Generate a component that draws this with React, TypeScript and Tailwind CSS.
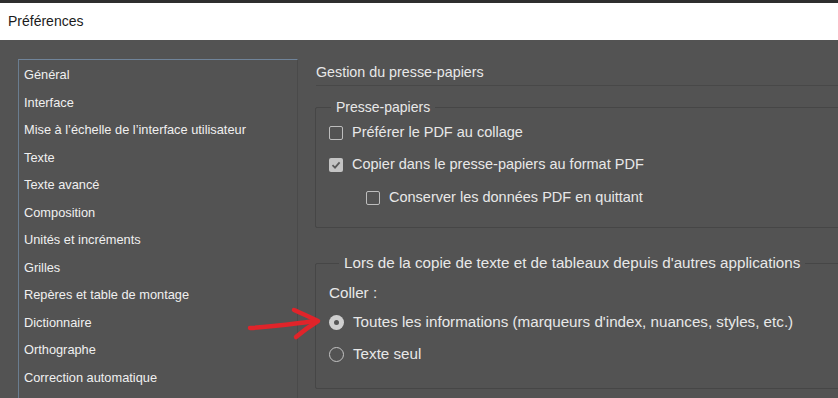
import React from "react";

const items = [
  "Général",
  "Interface",
  "Mise à l’échelle de l’interface utilisateur",
  "Texte",
  "Texte avancé",
  "Composition",
  "Unités et incréments",
  "Grilles",
  "Repères et table de montage",
  "Dictionnaire",
  "Orthographe",
  "Correction automatique",
];

function Checkbox({ checked }: { checked?: boolean }) {
  return checked ? (
    <span className="w-[14px] h-[14px] rounded-[2px] bg-[#c4c4c4] flex items-center justify-center shrink-0">
      <svg width="10" height="10" viewBox="0 0 10 10">
        <path d="M1.5 5.2 L4 7.6 L8.6 2.4" fill="none" stroke="#5a5a5a" strokeWidth="1.8" />
      </svg>
    </span>
  ) : (
    <span className="w-[14px] h-[14px] rounded-[2px] border border-[#bdbdbd] shrink-0" />
  );
}

function Radio({ checked }: { checked?: boolean }) {
  return checked ? (
    <span className="w-[15px] h-[15px] rounded-full bg-[#cfcfcf] flex items-center justify-center shrink-0">
      <span className="w-[5px] h-[5px] rounded-full bg-[#555555]" />
    </span>
  ) : (
    <span className="w-[15px] h-[15px] rounded-full border border-[#c4c4c4] shrink-0" />
  );
}

export default function App() {
  return (
    <div
      className="relative w-[838px] h-[398px] overflow-hidden bg-[#535353] flex flex-col text-[#e8e8e8]"
      style={{ fontFamily: '"Liberation Sans", Arial, sans-serif' }}
    >
      <div className="h-[3px] bg-[#2e2e2e] shrink-0" />
      <div className="h-[37px] bg-white shrink-0 flex items-center pl-[8px] text-[14px] text-[#1b1b1b]">
        Préférences
      </div>
      <div className="flex flex-1 min-h-0">
        <div className="pl-[18px] pt-[19px] shrink-0">
          <div className="w-[280px] h-[360px] border-t border-l border-t-[#70849a] border-l-[#6a7d90] border-r border-r-[#4a4a4a] pl-[5px] pt-[1px] text-[12.8px] text-[#f0f0f0]">
            {items.map((t) => (
              <div key={t} className="h-[27.5px] flex items-center whitespace-nowrap">
                {t}
              </div>
            ))}
          </div>
        </div>
        <div className="flex-1 min-w-0 pl-[17px] pt-[22px] text-[14.5px]">
          <div className="ml-[1px] h-[22px] flex items-center text-[14.3px] whitespace-nowrap">
            Gestion du presse-papiers
          </div>
          <div className="ml-[1px] h-px bg-[#484848] mt-[1px]" />
          <fieldset className="mt-[10px] -mr-[10px] h-[132px] border border-[#464646] rounded-[2px] pl-[13px]">
            <legend className="ml-[2px] px-[5px] h-[22px] leading-[22px] text-[14px] whitespace-nowrap">
              Presse-papiers
            </legend>
            <div className="flex items-center gap-[9px] h-[32px] -mt-[1px] whitespace-nowrap">
              <Checkbox />
              <span>Préférer le PDF au collage</span>
            </div>
            <div className="flex items-center gap-[9px] h-[32px] whitespace-nowrap">
              <Checkbox checked />
              <span>Copier dans le presse-papiers au format PDF</span>
            </div>
            <div className="flex items-center gap-[9px] h-[33px] pl-[37px] whitespace-nowrap">
              <Checkbox />
              <span>Conserver les données PDF en quittant</span>
            </div>
          </fieldset>
          <fieldset className="mt-[24px] -mr-[10px] h-[137px] border border-[#464646] rounded-[2px] pl-[13px] text-[15.2px]">
            <legend className="ml-[10px] px-[5px] h-[22px] leading-[22px] whitespace-nowrap">
              Lors de la copie de texte et de tableaux depuis d'autres applications
            </legend>
            <div className="h-[26px] flex items-center mt-[6px] whitespace-nowrap">Coller :</div>
            <div className="flex items-center gap-[9px] h-[32px] whitespace-nowrap">
              <Radio checked />
              <span>Toutes les informations (marqueurs d'index, nuances, styles, etc.)</span>
            </div>
            <div className="flex items-center gap-[9px] h-[32px] whitespace-nowrap">
              <Radio />
              <span>Texte seul</span>
            </div>
          </fieldset>
        </div>
      </div>
      <svg
        className="absolute left-[246px] top-[306px]"
        width="80"
        height="36"
        viewBox="0 0 80 36"
        fill="none"
      >
        <path
          d="M4 22 C 25 21, 45 18, 70 15"
          stroke="#e0242a"
          strokeWidth="4.5"
          strokeLinecap="round"
        />
        <path
          d="M48 4 C 57 8, 64 11, 72 15 C 64 20, 57 25, 50 31"
          stroke="#e0242a"
          strokeWidth="4.5"
          strokeLinecap="round"
          strokeLinejoin="round"
        />
      </svg>
    </div>
  );
}
